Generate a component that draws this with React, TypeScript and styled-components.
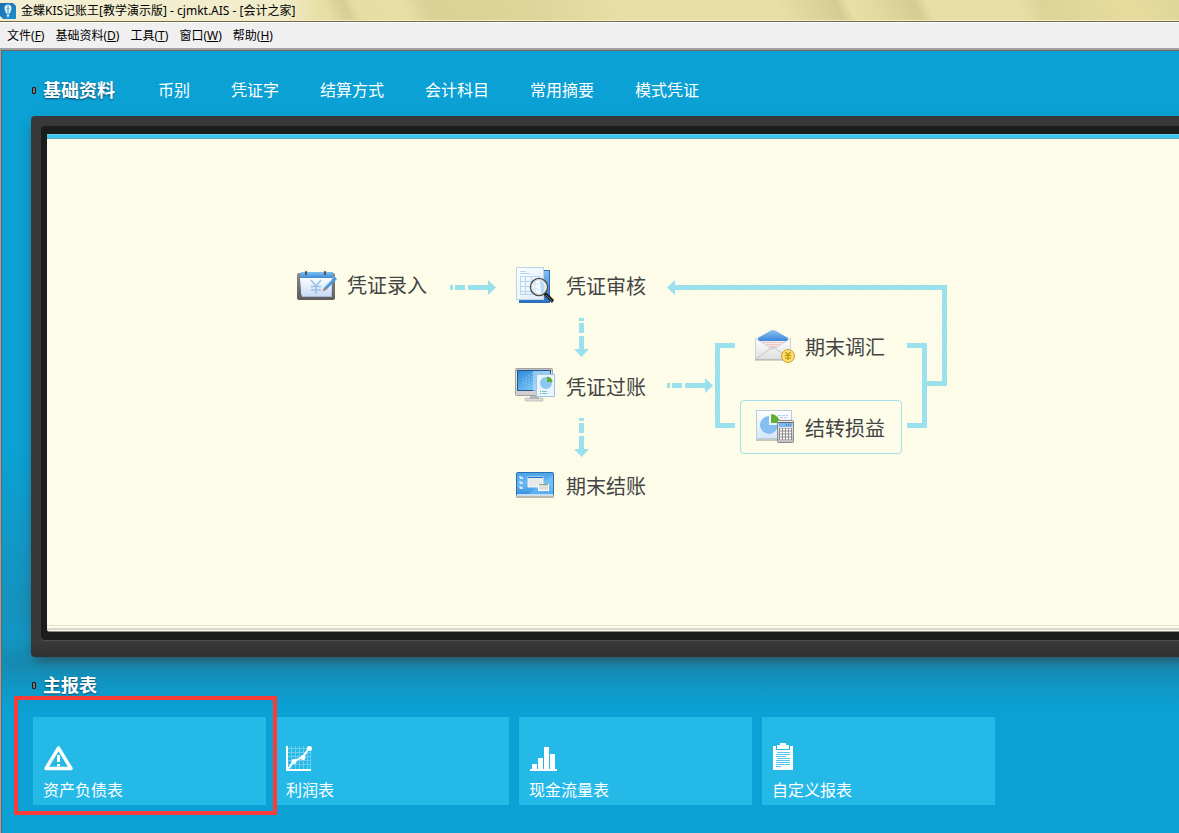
import React from 'react';
import styled, { createGlobalStyle, css } from 'styled-components';

const GlobalStyle = createGlobalStyle`
  *, *::before, *::after { box-sizing: border-box; }
  html, body, #root { min-height: 100vh; }
  body {
    margin: 0;
    background: #0ba1d4;
    font-family: "Noto Sans", "Noto Sans CJK SC", sans-serif;
    overflow-x: hidden;
  }
  button { font: inherit; color: inherit; border: 0; background: none; padding: 0; margin: 0; cursor: pointer; text-align: left; white-space: nowrap; }
  h1, h2 { margin: 0; font-weight: inherit; }
`;

const Window = styled.div`
  display: flex;
  flex-direction: column;
  min-height: 100vh;
`;

const TitleBar = styled.header`
  display: flex;
  align-items: center;
  gap: 5px;
  height: 22px;
  border-bottom: 1px solid #716a48;
  box-shadow: inset 0 -1px 0 #f3ecc8;
  background:
    linear-gradient(90deg, rgba(255, 255, 255, 0.5), rgba(255, 255, 255, 0.4) 280px, transparent 320px),
    linear-gradient(65deg, #e8dfa6 300px, #d6cd94 318px, #e6dda3 328px, #e8dfa6 372px, #dad197 392px, #ddd49a 480px, #e8dfa6 570px, #e8dfa6 710px, #d5cc93 765px, #e8dfa6 777px, #e2d99f 800px, #d5cc93 836px, #e8dfa6 848px, #e8dfa6 930px, #dcd398 950px, #e7dc9d 1030px, #dfd69a 1070px);
`;

const Title = styled.h1`
  font-size: 12px;
  line-height: 20px;
  color: #000;
  white-space: nowrap;
`;

const MenuBar = styled.nav`
  display: flex;
  gap: 11px;
  height: 26px;
  padding-left: 7px;
  border-top: 1px solid #fff;
  background: #f0f0f0;
  font-size: 12px;
  line-height: 24px;
  color: #000;
`;

const Workspace = styled.main`
  flex: 1;
  padding: 0 0 28px 30px;
  border-top: 2px solid #a0a0a0;
  border-left: 1px solid #a0a0a0;
  box-shadow: inset 1px 1px 0 #696969;
  background:
    linear-gradient(180deg, transparent 584px, rgba(30, 120, 150, 0.5) 612px, transparent 659px),
    linear-gradient(180deg, transparent 400px, rgba(32, 130, 165, 0.5) 560px, transparent 640px),
    #0ba1d4;
`;

const SectionHead = styled.div<{ $top: number; $bottom: number }>`
  display: flex;
  align-items: center;
  padding: ${p => p.$top}px 0 ${p => p.$bottom}px 1px;
  line-height: 24px;
  color: #fff;
`;

const Bullet = styled.span`
  width: 4px;
  height: 7px;
  margin-right: 7px;
  border: 1px solid #1a1a1a;
  border-radius: 1px;
  background: #777;
`;

const SectionTitle = styled.h2`
  font-size: 18px;
  font-weight: 700;
  white-space: nowrap;
  text-shadow: 0 1px 2px rgba(0, 40, 60, 0.7);
`;

const NavLinks = styled.nav`
  display: flex;
  gap: 41px;
  margin-left: 43px;
  font-size: 16px;
  text-shadow: 0 1px 1px rgba(0, 60, 90, 0.4);
`;

const Frame = styled.section`
  padding: 10px 0 17px 10px;
  margin-right: -12px;
  border-radius: 4px 0 0 4px;
  background: linear-gradient(180deg, #383838 96%, #3a3a3a 97%, #303030);
  box-shadow: 0 6px 12px -4px rgba(50, 60, 65, 0.9);
`;

const Bezel = styled.div`
  padding: 8px 0 8px 6px;
  border-radius: 4px 0 0 4px;
  background: #1c1c1c;
  box-shadow: 0 1px 0 #505050;
`;

const Screen = styled.div`
  overflow: hidden;
  border-radius: 0 0 0 3px;
  background: #fdfce9;
  border-bottom: 1px solid #8c8c86;
`;

const Strip = styled.div`
  height: 5px;
  background: linear-gradient(180deg, #5fcdea 1px, #3cc6f0 1px, #3cc6f0 4px, #5fa6b8 4px);
`;

const Canvas = styled.div`
  position: relative;
  height: 492px;
  border-bottom: 1px solid #f4f3e2;
  box-shadow: inset 0 -2px 0 #d9d9cc, inset 0 -4px 0 #fdfce9, inset 0 -5px 0 #e2e2d4;
`;

const Connectors = styled.svg`
  position: absolute;
  left: 0;
  top: 0;
`;

const FlowNode = styled.button<{ $x: number; $y: number; $active?: boolean }>`
  position: absolute;
  left: ${p => p.$x}px;
  top: ${p => p.$y}px;
  display: flex;
  align-items: center;
  gap: 11px;
  width: 162px;
  height: 54px;
  padding: 2px 0 0 13px;
  border: 1px solid transparent;
  border-radius: 4px;
  font-size: 20px;
  line-height: 28px;
  color: #444;
  ${p => p.$active && css`border-color: #a3e0ea;`}
  svg { flex: none; overflow: visible; }
  span { padding-top: 2px; }
`;

const Cards = styled.div`
  display: flex;
  gap: 10px;
  padding-left: 2px;
`;

const CardSlot = styled.div`
  position: relative;
  flex: 0 1 233px;
`;

const Card = styled.button`
  display: flex;
  flex-direction: column;
  gap: 5px;
  width: 100%;
  height: 88px;
  padding: 26px 10px 0;
  background: #25b9e8;
  color: #fff;
  font-size: 16px;
  line-height: 24px;
  svg { flex: none; }
`;

const Highlight = styled.div`
  position: absolute;
  inset: -21px -11px -10px -19px;
  border: 4px solid #fb3b37;
  z-index: 1;
  pointer-events: none;
`;

const menus = [
  ['文件', 'F'], ['基础资料', 'D'], ['工具', 'T'], ['窗口', 'W'], ['帮助', 'H'],
];

const links = ['币别', '凭证字', '结算方式', '会计科目', '常用摘要', '模式凭证'];

const Logo = () => (
  <svg width="16" height="16" viewBox="0 0 16 16" aria-hidden="true">
    <defs>
      <linearGradient id="logo" x1="0" y1="0" x2="1" y2="1">
        <stop offset="0" stopColor="#1b6fb0" /><stop offset="1" stopColor="#1e8fd0" />
      </linearGradient>
    </defs>
    <path d="M0 0h13l3 3v13H3l-3-3z" fill="url(#logo)" />
    <path d="M8 1.500c2 0 3.500 1.500 3.500 3.500 0 2.500-1.500 3.500-1.500 5.500H6C6 8.500 4.500 7.500 4.500 5c0-2 1.500-3.500 3.500-3.500z" fill="#e4f3fb" />
    <path d="M6.500 11.500h3L8 15z" fill="#e4f3fb" />
    <path d="M8 2v8M6.500 5l1.500 1.500L9.500 5" stroke="#2b86c4" strokeWidth="0.800" fill="none" />
  </svg>
);

const EntryIcon = () => (
  <svg width="40" height="40" viewBox="0 0 40 40" aria-hidden="true">
    <defs>
      <linearGradient id="ePage" x1="0" y1="0" x2="0" y2="1"><stop offset="0" stopColor="#fff" /><stop offset="1" stopColor="#c9dcf6" /></linearGradient>
      <linearGradient id="eHead" x1="0" y1="0" x2="0" y2="1"><stop offset="0" stopColor="#7fc0f2" /><stop offset="1" stopColor="#3a8bd8" /></linearGradient>
      <linearGradient id="eBoard" x1="0" y1="0" x2="0" y2="1"><stop offset="0" stopColor="#8a8a8a" /><stop offset="1" stopColor="#5c5c5c" /></linearGradient>
    </defs>
    <rect x="1" y="8" width="38" height="27" rx="2" fill="url(#eBoard)" />
    <path d="M4 12h32v20H6z" fill="#a9bcd6" />
    <path d="M4 12h32l-1 19H7c-2 0-2-3-2-6z" fill="url(#ePage)" />
    <path d="M5 7h32v6H4z" fill="url(#eHead)" />
    <path d="M10 10V6M29 10V6" stroke="#555" strokeWidth="2" />
    <path d="M9 7V5M28 7V5" stroke="#ddd" />
    <path d="M15 15l5 6 5-6M20 21v8M15 21.500h10M15 25h10" stroke="#9dbfec" strokeWidth="1.600" fill="none" />
    <path d="M39 12l2 2-11 11-3 1 1-3z" fill="#4b97dc" />
    <path d="M28 23l2 2-3.500 1.500z" fill="#d9824f" />
    <path d="M38 12l-10 10.500" stroke="#a4d2f7" strokeWidth="0.800" />
  </svg>
);

const AuditIcon = () => (
  <svg width="40" height="40" viewBox="0 0 40 40" aria-hidden="true">
    <defs>
      <linearGradient id="aBack" x1="0" y1="0" x2="0" y2="1"><stop offset="0" stopColor="#7cc0ee" /><stop offset="1" stopColor="#2a70c4" /></linearGradient>
      <linearGradient id="aPage" x1="0" y1="0" x2="1" y2="1"><stop offset="0" stopColor="#fff" /><stop offset="1" stopColor="#dcebf9" /></linearGradient>
    </defs>
    <rect x="4.500" y="4.500" width="30" height="32" fill="url(#aBack)" stroke="#2c6dbd" />
    <rect x="1.500" y="1.500" width="27" height="32" fill="url(#aPage)" stroke="#bcd3ea" />
    <path d="M5 5.500h6M5 7.500h10M5 10.500h20M5 15.500h20M5 20.500h20M5 25.500h20M5 28.500h20M5.500 10v19M10.500 10v19M16.500 10v19M24.500 10v19" stroke="#a9d3ef" strokeWidth="1" opacity="0.850" />
    <path d="M29 27l3 0 7 7-2 3-8-8z" fill="#1d1d1d" />
    <path d="M31 29l6 6" stroke="#888" strokeWidth="0.800" />
    <circle cx="24" cy="21" r="8.500" fill="#f4fafe" stroke="#4b4b4b" strokeWidth="1.500" />
    <path d="M20 15v12M18 18h6M18 23h6" stroke="#cde4f6" />
    <path d="M25 14c5 2 6 8 3 13h-2z" fill="#b9d9f6" />
    <circle cx="24" cy="21" r="7.300" fill="none" stroke="#d8d8d8" strokeWidth="1" />
  </svg>
);

const PostIcon = () => (
  <svg width="40" height="40" viewBox="0 0 40 40" aria-hidden="true">
    <defs>
      <linearGradient id="pScreen" x1="0" y1="0" x2="1" y2="1"><stop offset="0" stopColor="#2f86d6" /><stop offset="0.500" stopColor="#5fb2ec" /><stop offset="1" stopColor="#a8dcfa" /></linearGradient>
      <linearGradient id="pFrame" x1="0" y1="0" x2="0" y2="1"><stop offset="0" stopColor="#b4b4b4" /><stop offset="0.200" stopColor="#eee" /><stop offset="1" stopColor="#ccc" /></linearGradient>
    </defs>
    <rect x="10" y="31" width="18" height="3" rx="1" fill="#dcdcdc" stroke="#a8a8a8" strokeWidth="0.600" />
    <path d="M15 28h9v4h-9z" fill="#b5b5b5" />
    <rect x="0.500" y="1.500" width="37" height="27" rx="1" fill="url(#pFrame)" stroke="#a2a2a2" />
    <rect x="2.500" y="3.500" width="33" height="20" fill="url(#pScreen)" stroke="#22588f" />
    <path d="M18 4h17v20H18z" fill="#bfe2fa" opacity="0.600" />
    <path d="M14 8v14M11 10v10M8 12v6M17 6v16" stroke="#8fc8f2" strokeWidth="1.500" strokeDasharray="1.500 1.500" opacity="0.700" />
    <rect x="21.500" y="7.500" width="18" height="22" fill="#eaf4fd" stroke="#9fc4e6" />
    <circle cx="31" cy="16" r="6" fill="#8cc6f3" />
    <path d="M32 15V9.500a5.500 5.500 0 0 1 5.500 5.500z" fill="#5fae2c" />
    <path d="M25 24.500h1M25 26.500h1" stroke="#5fae2c" />
    <path d="M27 24.500h5M27 26.500h5" stroke="#7fb8e8" />
  </svg>
);

const CloseIcon = () => (
  <svg width="40" height="40" viewBox="0 0 40 40" aria-hidden="true">
    <defs>
      <linearGradient id="cBg" x1="0" y1="0" x2="0" y2="1"><stop offset="0" stopColor="#4ca3e8" /><stop offset="0.500" stopColor="#6ab9f0" /><stop offset="1" stopColor="#2f8de0" /></linearGradient>
    </defs>
    <rect x="1" y="8" width="38" height="24" rx="1" fill="#b9b9b0" />
    <rect x="1.500" y="6.500" width="37" height="23" rx="1" fill="url(#cBg)" stroke="#2a6fb5" />
    <path d="M12 29L38 9v20z" fill="#8fd0f8" opacity="0.400" />
    <rect x="2" y="28" width="36" height="2" fill="#c8dff2" />
    <path d="M4 10h2v1h2v2H5zM4 15h2v1h2v2H5zM4 20h2v1h2v2H5z" fill="#cfe9fb" />
    <rect x="13" y="11" width="15" height="10" fill="#e9e9e9" stroke="#fff" strokeWidth="0.800" />
    <path d="M13 11.500h15" stroke="#1d73c4" />
    <rect x="23.500" y="18.500" width="10" height="6" fill="#dedede" stroke="#fff" />
    <path d="M24 18.500h9" stroke="#83a875" />
  </svg>
);

const ExchangeIcon = () => (
  <svg width="40" height="40" viewBox="0 0 40 40" aria-hidden="true">
    <defs>
      <linearGradient id="xFlap" x1="0" y1="0" x2="0" y2="1"><stop offset="0" stopColor="#8cc3f2" /><stop offset="1" stopColor="#3b86d9" /></linearGradient>
      <linearGradient id="xBody" x1="0" y1="0" x2="0" y2="1"><stop offset="0" stopColor="#fff" /><stop offset="1" stopColor="#dfdfdf" /></linearGradient>
    </defs>
    <path d="M1 11L19 2l18 9v22H1z" fill="#f4f4f2" />
    <path d="M4 11L17 3.500q2-1 4 0L34 11v3H4z" fill="url(#xFlap)" />
    <path d="M6 14h26L20 23z" fill="#f7ebea" />
    <path d="M9 15.500h20M12 17.500h14M15 19.500h8" stroke="#eec7c6" />
    <path d="M1.500 11.500L19 22.500l17.500-11v21h-35z" fill="url(#xBody)" stroke="#c9c9cc" strokeWidth="0.800" />
    <path d="M2 32l15-11q2-1 4 0l15 11" fill="none" stroke="#c4c4c8" />
    <path d="M1 33h36" stroke="#a9a9a9" />
    <circle cx="34" cy="29" r="6.500" fill="#f7d95a" stroke="#cfa233" />
    <circle cx="34" cy="29" r="5" fill="none" stroke="#fbeb9c" strokeWidth="0.800" />
    <path d="M31.500 25l2.500 3 2.500-3M34 28v5M31 28.500h6M31 31h6" stroke="#c4930f" strokeWidth="1.200" fill="none" />
  </svg>
);

const TransferIcon = () => (
  <svg width="40" height="40" viewBox="0 0 40 40" aria-hidden="true">
    <defs>
      <linearGradient id="tPage" x1="0" y1="0" x2="0" y2="1"><stop offset="0" stopColor="#fff" /><stop offset="1" stopColor="#d6e7f8" /></linearGradient>
      <linearGradient id="tCalc" x1="0" y1="0" x2="0" y2="1"><stop offset="0" stopColor="#f4f4f4" /><stop offset="1" stopColor="#bdbdbd" /></linearGradient>
    </defs>
    <path d="M2 31h36v2H2z" fill="#c6c7bd" />
    <rect x="2.500" y="2.500" width="35" height="28" fill="url(#tPage)" stroke="#b9cde0" />
    <path d="M15 8v9h9a9 9 0 1 1-9-9z" fill="#83bff2" />
    <path d="M17 6a9 9 0 0 1 9 9h-9z" fill="#62b02f" />
    <path d="M24 7.500h10M26 9.500h8" stroke="#a7d0ee" strokeDasharray="3 1" />
    <rect x="23.500" y="12.500" width="16" height="22" rx="1" fill="url(#tCalc)" stroke="#8b8b8b" />
    <rect x="24.500" y="15" width="14" height="4" fill="#7db5f0" />
    <path d="M24 14.500h15" stroke="#666" />
    <path d="M32 17h5" stroke="#2666b5" strokeDasharray="1 1" />
    <rect x="25" y="20" width="13" height="12" fill="#8d8d8d" />
    <path d="M26 21.500h12M26 24.500h12M26 27.500h12M26 30.500h12" stroke="#fff" strokeWidth="2" strokeDasharray="2 1" />
  </svg>
);

const FlowLines = () => (
  <Connectors width="920" height="370" viewBox="47 139 920 370" aria-hidden="true">
    <defs>
      <pattern id="hatch" width="3" height="3" patternUnits="userSpaceOnUse">
        <rect width="3" height="3" fill="#a0e5f0" />
        <path d="M0 3L3 0" stroke="#8bd9e7" strokeWidth="1" />
      </pattern>
    </defs>
    <g fill="url(#hatch)">
      <path d="M450 285h3v5h-3zM455 285h10v5h-10zM468 285h20v-5l8 7.500-8 7.500v-5h-20z" />
      <path d="M667 383h3v5h-3zM672 383h10v5h-10zM685 383h20v-5l8 7.500-8 7.500v-5h-20z" />
      <path d="M579 318h5v3h-5zM579 323h5v10h-5zM579 336h5v13h5l-7.500 8-7.500-8h5z" />
      <path d="M579 418h5v3h-5zM579 423h5v10h-5zM579 436h5v13h5l-7.500 8-7.500-8h5z" />
      <path d="M667 287.500l8-7.500v5h272v101h-20v-5h15v-91H675v5z" />
      <path d="M735 343v5h-15v75h15v5h-20v-85z" />
      <path d="M907 343v5h15v75h-15v5h20v-85z" />
    </g>
  </Connectors>
);

const BalanceIcon = () => (
  <svg width="30" height="30" viewBox="0 0 30 30" aria-hidden="true">
    <path d="M15.500 5L28 25.500H3z" fill="none" stroke="#fff" strokeWidth="3.400" strokeLinejoin="round" />
    <path d="M14 12h3v7h-3zM14 21h3v2.500h-3z" fill="#fff" />
  </svg>
);

const ProfitIcon = () => (
  <svg width="30" height="30" viewBox="0 0 30 30" aria-hidden="true">
    <path d="M5.500 3v23M9.500 3v23M13.500 3v23M17.500 3v23M21.500 3v23M24.500 3v23M2 5.500h23M2 9.500h23M2 13.500h23M2 17.500h23M2 21.500h23" stroke="#6bcdee" />
    <path d="M1 3v24h24" fill="none" stroke="#fff" strokeWidth="2" />
    <path d="M2 26l6-8 9-4 6-9" fill="none" stroke="#fff" strokeWidth="2" />
    <circle cx="8" cy="18.500" r="2.500" fill="#fff" />
    <circle cx="17" cy="14.500" r="2.500" fill="#fff" />
    <circle cx="23.500" cy="5.500" r="2.500" fill="#fff" />
  </svg>
);

const CashIcon = () => (
  <svg width="30" height="30" viewBox="0 0 30 30" aria-hidden="true">
    <path d="M1 26h27v2H1zM3 21h5v5H3zM9 15h5v11H9zM15 4h5v22h-5zM21 11h5v15h-5z" fill="#fff" />
  </svg>
);

const CustomIcon = () => (
  <svg width="30" height="30" viewBox="0 0 30 30" aria-hidden="true">
    <path d="M1 3h3v4h14V3h3v24H1z" fill="#fff" />
    <path d="M8 0h6v2h3v4H5V2h3z" fill="#fff" />
    <path d="M5 9.500h13M4 11.500h14M4 13.500h10M5 15.500h13M4 17.500h14M4 19.500h14M4 21.500h14M4 23.500h5" stroke="#55c6ec" />
  </svg>
);

const nodes = [
  { label: '凭证录入', x: 235, y: 118, Icon: EntryIcon },
  { label: '凭证审核', x: 454, y: 119, Icon: AuditIcon },
  { label: '凭证过账', x: 454, y: 220, Icon: PostIcon },
  { label: '期末结账', x: 454, y: 319, Icon: CloseIcon },
  { label: '期末调汇', x: 693, y: 180, Icon: ExchangeIcon },
  { label: '结转损益', x: 693, y: 261, Icon: TransferIcon, active: true },
];

const reports = [
  { label: '资产负债表', Icon: BalanceIcon, marked: true },
  { label: '利润表', Icon: ProfitIcon },
  { label: '现金流量表', Icon: CashIcon },
  { label: '自定义报表', Icon: CustomIcon },
];

export default function App() {
  return (
    <>
      <GlobalStyle />
      <Window>
        <TitleBar>
          <Logo />
          <Title>金蝶KIS记账王[教学演示版] - cjmkt.AIS - [会计之家]</Title>
        </TitleBar>
        <MenuBar>
          {menus.map(([label, key]) => (
            <button key={key} type="button">{label}(<u>{key}</u>)</button>
          ))}
        </MenuBar>
        <Workspace>
          <SectionHead $top={28} $bottom={14}>
            <Bullet />
            <SectionTitle>基础资料</SectionTitle>
            <NavLinks>
              {links.map(link => <button key={link} type="button">{link}</button>)}
            </NavLinks>
          </SectionHead>
          <Frame>
            <Bezel>
              <Screen>
                <Strip />
                <Canvas>
                  <FlowLines />
                  {nodes.map(({ label, x, y, Icon, active }) => (
                    <FlowNode key={label} type="button" $x={x} $y={y} $active={active}>
                      <Icon />
                      <span>{label}</span>
                    </FlowNode>
                  ))}
                </Canvas>
              </Screen>
            </Bezel>
          </Frame>
          <SectionHead $top={16} $bottom={20}>
            <Bullet />
            <SectionTitle>主报表</SectionTitle>
          </SectionHead>
          <Cards>
            {reports.map(({ label, Icon, marked }) => (
              <CardSlot key={label}>
                <Card type="button">
                  <Icon />
                  {label}
                </Card>
                {marked && <Highlight />}
              </CardSlot>
            ))}
          </Cards>
        </Workspace>
      </Window>
    </>
  );
}
